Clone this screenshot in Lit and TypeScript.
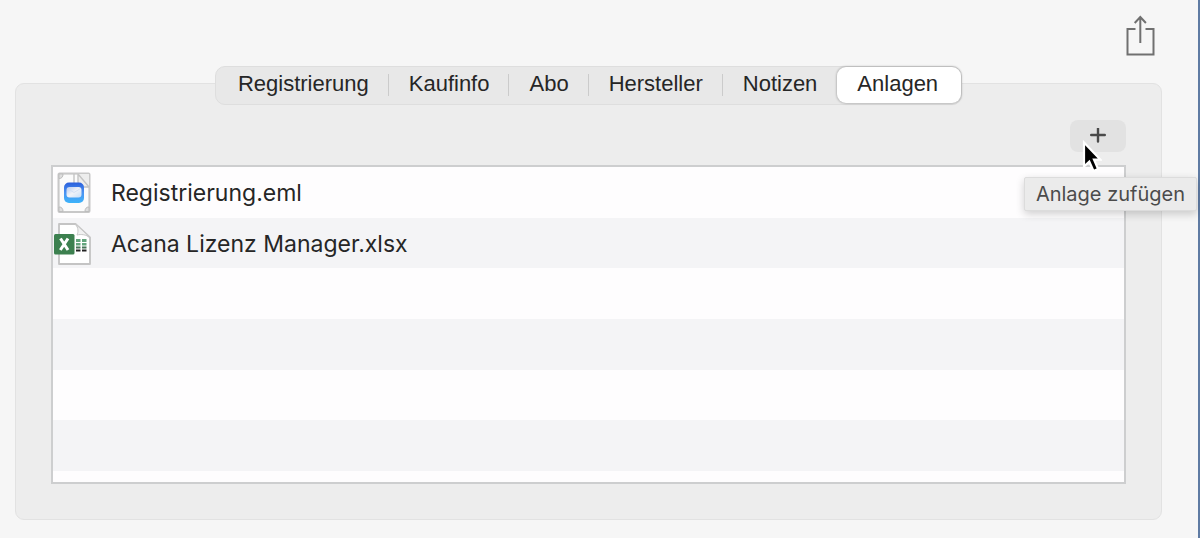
import { LitElement, html, css, svg } from "lit";
import { customElement, state } from "lit/decorators.js";

const mailFileIcon = svg`
  <svg class="file-icon" viewBox="1 0 40 44" aria-hidden="true">
    <defs>
      <linearGradient id="mail" x1="0" y1="0" x2="0" y2="1">
        <stop offset="0" stop-color="#2a5fdc" />
        <stop offset="0.5" stop-color="#4b93f2" />
        <stop offset="1" stop-color="#3db4fa" />
      </linearGradient>
      <linearGradient id="envelope" x1="0" y1="0" x2="1" y2="1">
        <stop offset="0" stop-color="#b4cbf0" />
        <stop offset="0.5" stop-color="#f2f3f8" />
        <stop offset="1" stop-color="#c6def8" />
      </linearGradient>
    </defs>
    <rect x="6.500" y="2.500" width="31" height="38.500" rx="1" fill="#f1f1f1" stroke="#c8c8c8" stroke-width="2" />
    <path d="M12 4h14l10 13v18l-4 5H12l-4-5V8z" fill="#fbfbfb" />
    <path d="M26 3v8q0 5 5 5h6V3z" fill="#ededed" />
    <path d="M22 3v10M26 3v8q0 5 5 5h6M26 3l11 13" fill="none" stroke="#c4c4c4" stroke-width="1.400" />
    <g fill="#dedede" stroke="#bdbdbd">
      <path d="M7 7.500q4 0 4-4.500H7zM7 36q4 0 4 4.500H7zM37 36q-4 0-4 4.500h4z" />
    </g>
    <rect x="12" y="11.500" width="20" height="20.500" rx="5" fill="url(#mail)" />
    <rect x="14.500" y="16" width="15" height="10.500" rx="3" fill="url(#envelope)" />
    <path d="M15.500 17.500l6.500 4 6.500-4" fill="none" stroke="#d3e0f4" />
  </svg>`;

const excelFileIcon = svg`
  <svg class="file-icon" viewBox="1 0 40 44" aria-hidden="true">
    <path d="M7 2h16.500L38 15.500V42H7z" fill="#fff" stroke="#c4c4c4" stroke-width="1.800" stroke-linejoin="round" />
    <path d="M23.500 2c3 4 3 8 1.500 11 4-1 9-.5 13 2.500z" fill="#f1f1f1" stroke="#c8c8c8" />
    <g fill="#64a57d">
      <rect x="24" y="17" width="4.500" height="3" /><rect x="30" y="17" width="4.500" height="3" />
      <rect x="24" y="21" width="4.500" height="2.500" /><rect x="30" y="21" width="4.500" height="2.500" />
    </g>
    <g fill="#477357">
      <rect x="24" y="24.500" width="4.500" height="2" /><rect x="30" y="24.500" width="4.500" height="2" />
      <rect x="24" y="27.500" width="4.500" height="2" fill="#222" /><rect x="30" y="27.500" width="4.500" height="2" fill="#222" />
    </g>
    <rect x="2" y="12" width="20.500" height="20.500" rx="1.500" fill="#3c804f" />
    <path d="M8.500 16.500l7.500 11.500M16 16.500L8.300 28" stroke="#fff" stroke-width="3" fill="none" />
  </svg>`;

const attachments = [
  { name: "Registrierung.eml", icon: mailFileIcon },
  { name: "Acana Lizenz Manager.xlsx", icon: excelFileIcon },
];

const visibleRows = 6;

@customElement("app-root")
export class AppRoot extends LitElement {
  static styles = css`
    :host {
      display: block;
      min-height: 100vh;
      box-sizing: border-box;
      padding: 0 36px 18px 15px;
      border-right: 2px solid #5f7ba3;
      background: #f6f6f6;
      color: #262626;
      font-family: Inter, "Liberation Sans", sans-serif;
    }

    button {
      margin: 0;
      padding: 0;
      border: 0;
      background: none;
      color: inherit;
      font: inherit;
    }

    .toolbar {
      display: flex;
      justify-content: flex-end;
      padding: 14px 6px 8px;
    }

    .share,
    .share-icon {
      display: block;
      width: 32px;
      height: 44px;
    }

    .tabs {
      position: relative;
      display: flex;
      width: fit-content;
      height: 39px;
      box-sizing: border-box;
      margin: 0 auto -22px;
      border: 1px solid #dedede;
      border-radius: 10px;
      background: #e8e8e8;
      font: 22px/34px "Liberation Sans", Arial, sans-serif;
    }

    .tab {
      display: flex;
      align-items: stretch;
      padding-left: 20px;
    }

    .tab:first-child {
      padding-left: 22px;
    }

    .tab::after {
      content: "";
      width: 1px;
      height: 22px;
      margin: 7px 0 0 19px;
      background: #cbcbcb;
    }

    .tab:nth-last-child(2)::after {
      background: none;
    }

    .tab.selected {
      padding: 0 23px 0 20px;
      border-radius: 9px;
      background: #fff;
      box-shadow: 0 0 2px 1px #00000030;
      margin-bottom: 1px;
    }

    .tab.selected::after {
      display: none;
    }

    .panel {
      padding: 36px 35px 35px;
      border: 1px solid #e2e2e2;
      border-radius: 9px;
      background: #ededed;
    }

    .actions {
      position: relative;
      display: flex;
      justify-content: flex-end;
      margin-bottom: 13px;
    }

    .add {
      display: grid;
      place-items: center;
      width: 56px;
      height: 32px;
      border-radius: 8px;
      background: #e2e2e2;
    }

    .add-icon {
      width: 16px;
      height: 16px;
    }

    .pointer {
      position: absolute;
      z-index: 2;
      top: 20px;
      right: 24px;
      width: 20px;
      height: 34px;
    }

    .tooltip {
      position: absolute;
      z-index: 1;
      top: 57px;
      right: -71px;
      padding: 0 11px;
      border: 1px solid #dcdcdc;
      border-radius: 2px;
      background: #ebebeb;
      box-shadow: 0 3px 9px #00000030;
      color: #4b4b4b;
      font-size: 20px;
      line-height: 32px;
      white-space: nowrap;
    }

    .files {
      display: grid;
      grid-template-rows: repeat(6, 1fr);
      height: 304px;
      margin: 0;
      padding: 0 0 11px;
      border: 2px solid #cdcecf;
      background: #fefdfe;
      list-style: none;
      font-size: 23px;
    }

    .file {
      display: flex;
      align-items: center;
      gap: 18px;
      min-width: 0;
      padding-top: 2px;
    }

    .file:nth-child(even) {
      background: #f4f4f6;
    }

    .file-icon {
      width: 40px;
      height: 44px;
    }
  `;

  @state() private tabs = ["Registrierung", "Kaufinfo", "Abo", "Hersteller", "Notizen", "Anlagen"];
  @state() private selected = "Anlagen";

  render() {
    return html`
      <header class="toolbar">
        <button class="share" aria-label="Teilen">
          <svg class="share-icon" viewBox="0 0 32 44" fill="none" stroke="#707070" stroke-width="2">
            <path d="M11.500 15H3.500v25.500h26V15h-8" />
            <path d="M16.300 29V3M10.700 9l5.600-6 5.600 6" />
          </svg>
        </button>
      </header>
      <div class="tabs" role="tablist">
        ${this.tabs.map(
          (tab) => html`<button
            class="tab ${tab === this.selected ? "selected" : ""}"
            role="tab"
            aria-selected=${tab === this.selected}
            @click=${() => (this.selected = tab)}
          >${tab}</button>`,
        )}
      </div>
      <main class="panel">
        <div class="actions">
          <button class="add" aria-label="Anlage zufügen" aria-describedby="add-tip">
            <svg class="add-icon" viewBox="0 1 16 16" stroke="#4a4a4a" stroke-width="2.400" stroke-linecap="round">
              <path d="M8 1.500v13M1.200 8h13.600" />
            </svg>
          </button>
          <div class="tooltip" id="add-tip" role="tooltip">Anlage zufügen</div>
          <svg class="pointer" viewBox="0 0 20 34" aria-hidden="true">
            <path d="M2 2.500v24l5.300-5 4.200 9.500 4.600-2-4.100-9.300h6.500z" fill="#000" stroke="#fff" stroke-width="2.200" />
          </svg>
        </div>
        <ul class="files">
          ${Array.from({ length: visibleRows }, (_, i) => {
            const file = attachments[i];
            return file
              ? html`<li class="file">${file.icon}<span>${file.name}</span></li>`
              : html`<li class="file" aria-hidden="true"></li>`;
          })}
        </ul>
      </main>
    `;
  }
}
